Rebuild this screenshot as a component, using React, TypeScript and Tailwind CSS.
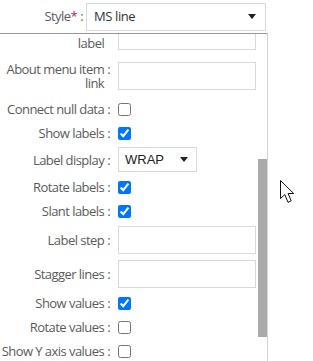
import React from "react"

const font = { fontFamily: '"Open Sans", "Liberation Sans", sans-serif' }

function Label({ children }: { children: React.ReactNode }) {
  return (
    <div className="flex w-[110px] shrink-0 justify-end text-[13px] leading-[14px] tracking-[-0.55px] text-[#5b5b5b]">
      <span className="whitespace-nowrap text-right">{children}</span>
      <span className="ml-[3px]">:</span>
    </div>
  )
}

function TextRow({ label, className = "" }: { label: React.ReactNode; className?: string }) {
  return (
    <div className={"flex " + className}>
      <Label>{label}</Label>
      <div className="ml-[8px] h-[28px] w-[138px] border border-[#d9d9d9] bg-white" />
    </div>
  )
}

function CheckRow({ label, checked, className = "" }: { label: string; checked?: boolean; className?: string }) {
  return (
    <div className={"flex h-[18px] items-center " + className}>
      <Label>{label}</Label>
      <input type="checkbox" defaultChecked={checked} className="ml-[8px] h-[13px] w-[13px]" />
    </div>
  )
}

function Caret() {
  return (
    <svg width="8" height="5" viewBox="0 0 8 5">
      <path d="M0 0h8L4 5z" fill="#222" />
    </svg>
  )
}

export default function App() {
  return (
    <div className="relative h-[361px] w-[313px] overflow-hidden bg-white" style={font}>
      {/* top field */}
      <div className="flex h-[33px] items-center">
        <div className="flex w-[83px] justify-end text-[13px] tracking-[-0.55px] text-[#5b5b5b]">
          <span>
            Style<span className="text-[#a0306e]">*</span>
          </span>
          <span className="ml-[3px]">:</span>
        </div>
        <div className="ml-[3px] flex h-[28px] w-[180px] items-center justify-between border border-[#d9d9d9] pl-[7px] pr-[9px] text-[13px] tracking-[-0.4px] text-[#333]">
          <span>MS line</span>
          <Caret />
        </div>
      </div>

      {/* scrolling panel */}
      <div className="flex h-[328px] w-[268px] overflow-hidden border-t border-r border-t-[#999] border-r-[#d4d4d4]">
        <div className="w-[258px] overflow-hidden">
          <div className="mt-[-12px]">
            <TextRow
              label={
                <>
                  About menu item
                  <br />
                  label
                </>
              }
            />
            <TextRow
              className="mt-[12px]"
              label={
                <>
                  About menu item
                  <br />
                  link
                </>
              }
            />
            <CheckRow label="Connect null data" className="mt-[10px]" />
            <CheckRow label="Show labels" checked className="mt-[6px]" />
            <div className="mt-[5px] flex h-[25px] items-center">
              <Label>Label display</Label>
              <div
                className="ml-[8px] flex h-[25px] w-[79px] items-center justify-between border border-[#d9d9d9] pl-[6px] pr-[8px] text-[13px] text-[#222]"
                style={{ fontFamily: '"Liberation Sans", Arial, sans-serif' }}
              >
                <span>WRAP</span>
                <Caret />
              </div>
            </div>
            <CheckRow label="Rotate labels" checked className="mt-[6px]" />
            <CheckRow label="Slant labels" checked className="mt-[6px]" />
            <TextRow label="Label step" className="mt-[6px] items-center" />
            <TextRow label="Stagger lines" className="mt-[6px] items-center" />
            <CheckRow label="Show values" checked className="mt-[6px]" />
            <CheckRow label="Rotate values" className="mt-[6px]" />
            <CheckRow label="Show Y axis values" className="mt-[6px]" />
          </div>
        </div>
        <div className="w-[9px]">
          <div className="mt-[125px] h-[178px] bg-[#ababab]" />
        </div>
      </div>

      {/* mouse pointer */}
      <svg className="absolute left-[280px] top-[180px]" width="18" height="26" viewBox="0 0 18 26">
        <path
          d="M0.5 0.5 L0.5 18.5 L4.8 14.6 L8 22.3 L11.2 20.9 L8.1 13.5 L13.7 13.5 Z"
          fill="#fff"
          stroke="#111"
          strokeWidth="1"
          strokeLinejoin="miter"
        />
      </svg>
    </div>
  )
}
